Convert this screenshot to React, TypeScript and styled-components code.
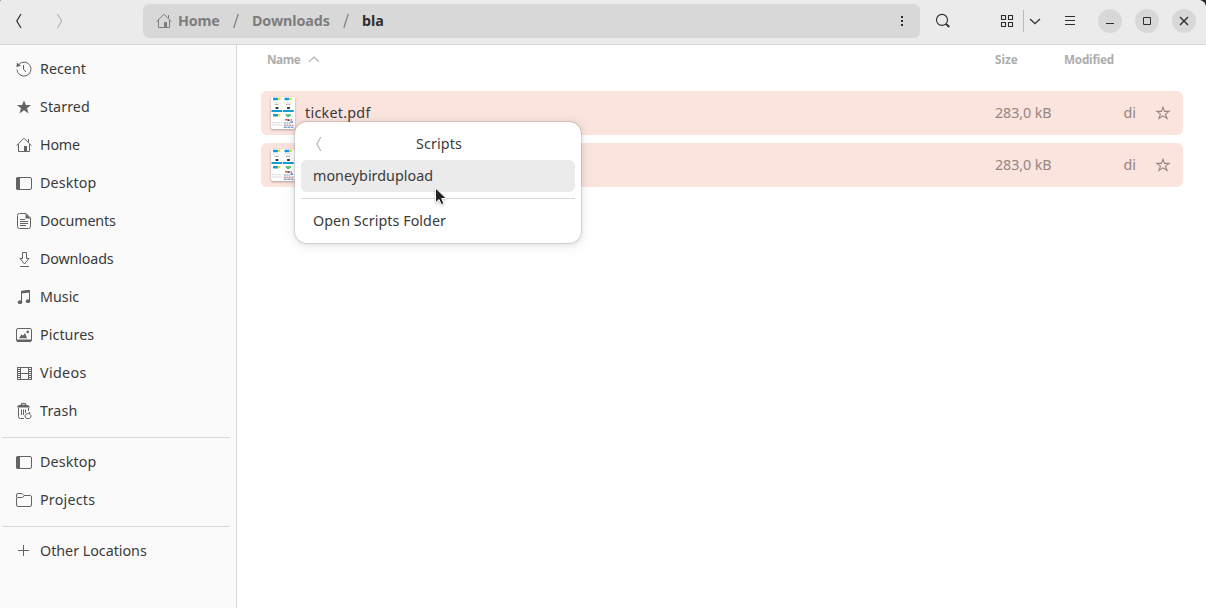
import React from "react";
import styled, { createGlobalStyle, css } from "styled-components";

const ink = "#3a3a3a";
const iconInk = "#636363";

const GlobalStyle = createGlobalStyle`
  *, *::before, *::after { box-sizing: border-box; }
  body {
    margin: 0;
    background: #2b2b2b;
    font-family: "Noto Sans", "Open Sans", sans-serif;
    font-size: 14.3px;
    color: ${ink};
    overflow: hidden;
  }
`;

const Window = styled.div`
  display: flex;
  flex-direction: column;
  width: 1206px;
  height: 608px;
  background: #fff;
  border-radius: 2px 8px 0 0;
  overflow: hidden;
`;

const Label = styled.span<{ $spacing?: number }>`
  line-height: 20px;
  white-space: nowrap;
  letter-spacing: ${(p) => p.$spacing ?? 0}px;
`;

/* Header bar */
const HeaderBar = styled.header`
  display: flex;
  align-items: center;
  flex: none;
  height: 45px;
  padding: 1px 10px 3px 10px;
  background: #ebebeb;
  border-bottom: 1px solid #d7d7d7;
  color: #2e2e2e;
`;

const IconButton = styled.button<{ $width?: number; $dim?: boolean }>`
  display: flex;
  align-items: center;
  justify-content: center;
  flex: none;
  width: ${(p) => p.$width ?? 34}px;
  height: 34px;
  padding: 0;
  border: 0;
  background: none;
  color: ${(p) => (p.$dim ? "#b4b4b4" : "#2e2e2e")};
`;

const NavButtons = styled.div`
  display: flex;
  gap: 24px;
  width: 133px;
`;

const PathBar = styled.nav`
  display: flex;
  align-items: center;
  width: 777px;
  height: 34px;
  padding: 0 10px 0 13px;
  border-radius: 6px;
  background: #d8d8d8;
  color: #808080;
  font-weight: 700;
`;

const Crumb = styled.span<{ $width: number; $current?: boolean }>`
  display: flex;
  align-items: center;
  gap: 6px;
  width: ${(p) => p.$width}px;
  color: ${(p) => (p.$current ? "#2e2e2e" : "#7d7d7d")};
`;

const Slash = styled.svg`
  flex: none;
  margin-right: 13px;
`;

const PathMenu = styled.span`
  display: flex;
  margin-left: auto;
  color: #2e2e2e;
`;

const ViewSwitcher = styled.div`
  display: flex;
  align-items: center;
  margin-left: 25px;
`;

const ViewDivider = styled.span`
  width: 1px;
  height: 22px;
  background: #b9b9b9;
`;

const WindowControls = styled.div`
  display: flex;
  gap: 13px;
  margin-left: auto;
`;

const ControlButton = styled.button`
  display: flex;
  align-items: center;
  justify-content: center;
  width: 24px;
  height: 24px;
  padding: 0;
  border: 0;
  border-radius: 50%;
  background: #d8d8d8;
  color: #2e2e2e;
`;

/* Sidebar */
const Body = styled.div`
  display: flex;
  flex: 1;
  min-height: 0;
`;

const Sidebar = styled.aside`
  flex: none;
  width: 237px;
  padding-top: 5px;
  background: #fafafa;
  border-right: 1px solid #d9d9d9;
`;

const Place = styled.a`
  display: flex;
  align-items: center;
  gap: 8px;
  height: 38px;
  padding-left: 16px;
`;

const PlaceSeparator = styled.hr`
  height: 1px;
  margin: 7px 6px 5px 2px;
  border: 0;
  background: #d9d9d9;
`;

const Glyph = styled.svg`
  flex: none;
  display: block;
  overflow: visible;
`;

/* File list */
const FileView = styled.main`
  flex: 1;
  padding: 0 23px 0 24px;
`;

const ColumnHeads = styled.div`
  display: grid;
  grid-template-columns: 728px 69px 1fr;
  height: 46px;
  padding: 4px 0 0 6px;
  color: #adadad;
  font-size: 11.7px;
  font-weight: 700;
`;

const SortHead = styled.span`
  display: flex;
  gap: 8px;
  height: 20px;
  align-items: center;
`;

const FileRow = styled.div`
  display: grid;
  grid-template-columns: 34px 690px 94px 48px 1fr;
  align-items: center;
  height: 44px;
  margin-bottom: 8px;
  padding-left: 10px;
  border-radius: 6px;
  background: #fbe4de;
`;

const Thumb = styled.svg`
  display: block;
  border-radius: 2px;
  filter: drop-shadow(0 1px 1px rgba(0, 0, 0, 0.3));
`;

const Meta = styled(Label)<{ $end?: boolean }>`
  color: #94857f;
  ${(p) => p.$end && css`
    text-align: right;
    padding-right: 1px;
  `}
`;

const StarCell = styled.span`
  display: flex;
  padding-left: 18px;
  color: #94857f;
`;

/* Scripts menu */
const Popover = styled.div`
  position: absolute;
  left: 295px;
  top: 122px;
  width: 286px;
  height: 121px;
  padding: 6px;
  border-radius: 12px;
  background: #fff;
  box-shadow: 0 0 0 1px rgba(0, 0, 0, 0.1), 0 1px 5px 1px rgba(0, 0, 0, 0.09),
    0 2px 14px 3px rgba(0, 0, 0, 0.05);
`;

const MenuTitle = styled.div`
  display: grid;
  grid-template-columns: 36px 1fr 34px;
  align-items: center;
  justify-items: center;
  height: 32px;
  color: #b8b8b8;
`;

const TitleText = styled(Label)`
  color: ${ink};
`;

const MenuItem = styled.div<{ $active?: boolean }>`
  display: flex;
  align-items: center;
  height: 32px;
  padding-left: 12px;
  border-radius: 6px;
  background: ${(p) => (p.$active ? "#ebebeb" : "transparent")};
`;

const MenuDivider = styled.hr`
  height: 1px;
  margin: 6px 0;
  border: 0;
  background: #d9d9d9;
`;

const Pointer = styled.svg`
  position: absolute;
  left: 434px;
  top: 187px;
  filter: drop-shadow(0 1px 1px rgba(0, 0, 0, 0.25));
`;

type IconName =
  | "recent" | "star" | "home" | "desktop" | "document" | "download"
  | "music" | "picture" | "video" | "trash" | "folder" | "plus";

const shapes: Record<IconName, React.ReactNode> = {
  recent: (
    <>
      <path d="M3.2 3A7 7 0 1 1 1 8.6" />
      <path d="M0.4 6.2 1 1.8 5 4.4Z" fill="currentColor" stroke="none" />
      <path d="M7.5 4V8.5L10 11" />
    </>
  ),
  star: <path d="M8 1.4 9.9 6H15L11 9.2 12.5 14.4 8 11.3 3.5 14.4 5 9.2 1 6H6.1Z" fill="currentColor" stroke="none" />,
  home: (
    <>
      <path d="M.6 8.6 8 1.2 15.4 8.6M2.5 7V14.5H13.5V7M12.5 2V5" />
      <path d="M8 9H11V15H8Z" fill="currentColor" stroke="none" />
    </>
  ),
  desktop: (
    <>
      <rect x=".5" y="2.5" width="15" height="12" rx="1.5" />
      <path d="M0 4Q0 2 2 2H4V15H2Q0 15 0 13Z" fill="currentColor" stroke="none" />
    </>
  ),
  document: (
    <>
      <path d="M3.5.5H10L14.5 5V13.5Q14.5 15.5 12.5 15.5H3.5Q1.5 15.5 1.5 13.5V2.5Q1.5.5 3.5.5ZM4 6.5H9M4 8.5H12M4 10.5H12M4 12.5H10" />
      <path d="M9.5.5 14.5 5.5H9.5Z" fill="currentColor" stroke="none" />
    </>
  ),
  download: <path d="M6.5 1.5H10.5V7.5H13L8.5 13 4 7.5H6.5ZM4 15.5H13" />,
  music: (
    <>
      <path d="M5.5 13V2.4L13.5 1.4V12" />
      <path d="M5 1.9 14 .9V3.6L5 4.5Z" fill="currentColor" stroke="none" />
      <ellipse cx="4" cy="13.2" rx="2.2" ry="1.9" fill="currentColor" stroke="none" />
      <ellipse cx="12" cy="12.2" rx="2.2" ry="1.9" fill="currentColor" stroke="none" />
    </>
  ),
  picture: (
    <>
      <rect x=".5" y="1.5" width="15" height="13" rx="1.5" />
      <path d="M1 12.5H15V14.8H1ZM3 11.3 5.6 7.3 7 8.8 9 6 11 11.3Z" fill="currentColor" stroke="none" />
      <circle cx="11.7" cy="4.9" r="1.3" fill="currentColor" stroke="none" />
    </>
  ),
  video: (
    <>
      <path d="M4.5 2V15M12.5 2V15M4.5 2.5H12.5M4.5 8.5H12.5M4.5 14.5H12.5M1.5 2V15M15.5 2V15" />
      <path d="M3 2V15M14 2V15" strokeWidth="2" strokeDasharray="1 1" />
    </>
  ),
  trash: (
    <>
      <path d="M5.5 2V.5H9.5V2M2.5 5V13.5Q2.5 15.5 4.5 15.5H8M5.5 6.5V12M7.5 6.5V12M9.5 6.5V10M12.5 5V8" />
      <path d="M1 4.5Q1.5 1.7 4.5 1.7H10Q13.2 1.7 14 4.5Z" fill="currentColor" stroke="none" />
      <path d="M10.5 11 9 12.7Q9 15.5 11 15.5H13.5Q15.5 14.5 15 12.5L13.5 11 14 9.5 12 10.5Z" />
    </>
  ),
  folder: <path d="M.5 5.5V3Q.5 1.5 2 1.5H6L8 3.5H14Q15.5 3.5 15.5 5V13Q15.5 14.5 14 14.5H2Q.5 14.5.5 13V7Q.5 5.5 2 5.5H6.5L8.5 3.5" />,
  plus: <path d="M2 7.5H13M7.5 2V13" />,
};

const PlaceIcon = ({ name, color = iconInk }: { name: IconName; color?: string }) => (
  <Glyph width="16" height="16" viewBox="0 0 16 16" fill="none" stroke="currentColor" color={color}>
    {shapes[name]}
  </Glyph>
);

const ChevronIcon = ({ flip = false }: { flip?: boolean }) => (
  <Glyph width="8" height="16" viewBox="0 0 8 16" fill="none" stroke="currentColor" strokeWidth="1.2">
    <path d={flip ? "M1.5 1 5.7 8 1.5 15" : "M6 1 1.8 8 6 15"} />
  </Glyph>
);

const Thumbnail = () => (
  <Thumb width="24" height="32" viewBox="0 0 24 32">
    <rect width="24" height="32" fill="#fff" />
    {[0, 11.5].map((x) => (
      <g key={x}>
        <path d={`M${x + 2} 2H${x + 7}`} stroke="#1597dc" strokeWidth="2.6" />
        <path d={`M${x + 6.8} 1.8H${x + 9.3}`} stroke="#e9dc2a" strokeWidth="2.4" />
        <path d={`M${x + 1.5} 5H${x + 9.5}`} stroke="#dcdcdc" strokeDasharray="1 .5" />
        <path d={`M${x + 3.5} 7.3H${x + 8}`} stroke="#8a8a8a" strokeDasharray="1 .4" />
        <path d={`M${x + 4.6} 11H${x + 7.3}`} stroke="#333" strokeWidth="2.2" />
        <path d={`M${x + 0.5} 14H${x + 11.2}`} stroke="#159bd9" strokeWidth="2" />
      </g>
    ))}
    <path d="M2 18.3H7" stroke="#1597dc" strokeWidth="2.4" />
    <path d="M6.8 18.1H9.3" stroke="#e9dc2a" strokeWidth="2.2" />
    <path d="M14.5 18H20" stroke="#38ba68" strokeWidth="1.4" />
    <path d="M16 19.3H18.5" stroke="#38ba68" strokeWidth="1.4" />
    <path d="M14 22.7H16.5M19.5 23H21" stroke="#e0603a" strokeWidth="1.6" />
    <path d="M16.5 23.2H18.5" stroke="#42474b" strokeWidth="1.8" />
    <path d="M.8 25.7H11M.8 28H11" stroke="#cacaca" strokeDasharray="1 .5" />
    <path d="M19.5 25.2H22" stroke="#4555e0" strokeWidth="1.2" />
    <path d="M12.8 26H19" stroke="#7c8fae" strokeDasharray="2 .6" />
    <path d="M12.8 28.2H22.5" stroke="#b06a7a" strokeDasharray="2 .7" />
    <path d="M12.8 30.2H22.5" stroke="#4f76bd" strokeDasharray="3 .7" />
  </Thumb>
);

type PlaceData = { icon: IconName; name: string; spacing?: number };

const places: PlaceData[][] = [
  [
    { icon: "recent", name: "Recent" },
    { icon: "star", name: "Starred", spacing: 0.05 },
    { icon: "home", name: "Home", spacing: -0.2 },
    { icon: "desktop", name: "Desktop", spacing: 0.12 },
    { icon: "document", name: "Documents", spacing: -0.15 },
    { icon: "download", name: "Downloads", spacing: -0.15 },
    { icon: "music", name: "Music" },
    { icon: "picture", name: "Pictures", spacing: 0.06 },
    { icon: "video", name: "Videos", spacing: 0.33 },
    { icon: "trash", name: "Trash", spacing: 0.2 },
  ],
  [
    { icon: "desktop", name: "Desktop", spacing: 0.12 },
    { icon: "folder", name: "Projects", spacing: 0.22 },
  ],
  [{ icon: "plus", name: "Other Locations", spacing: -0.02 }],
];

const files = [
  { name: "ticket.pdf", size: "283,0 kB", modified: "di" },
  { name: "", size: "283,0 kB", modified: "di" },
];

const CrumbSlash = () => (
  <Slash width="6" height="16" viewBox="0 0 6 16" stroke="#808080" strokeWidth="1.2">
    <path d="M5.2 1 .8 15" />
  </Slash>
);

export default function App() {
  return (
    <>
      <GlobalStyle />
      <Window>
        <HeaderBar>
          <NavButtons>
            <IconButton $width={17}><ChevronIcon /></IconButton>
            <IconButton $width={17} $dim><ChevronIcon flip /></IconButton>
          </NavButtons>
          <PathBar>
            <Crumb $width={77}>
              <PlaceIcon name="home" color="#7d7d7d" />
              <Label $spacing={-0.2}>Home</Label>
            </Crumb>
            <CrumbSlash />
            <Crumb $width={91}><Label $spacing={-0.1}>Downloads</Label></Crumb>
            <CrumbSlash />
            <Crumb $width={40} $current><Label>bla</Label></Crumb>
            <PathMenu>
              <Glyph width="16" height="16" viewBox="0 0 16 16" fill="currentColor">
                <path d="M7 3H9V5H7ZM7 7H9V9H7ZM7 11H9V13H7Z" />
              </Glyph>
            </PathMenu>
          </PathBar>
          <IconButton $width={46}>
            <Glyph width="16" height="16" viewBox="0 0 16 16" fill="none" stroke="currentColor" strokeWidth="1.1">
              <circle cx="7" cy="6.9" r="5.5" />
              <path d="M11 10.8 14.2 14" strokeWidth="1.9" />
            </Glyph>
          </IconButton>
          <ViewSwitcher>
            <IconButton $width={32}>
              <Glyph width="16" height="16" viewBox="0 0 16 16" fill="none" stroke="currentColor" strokeWidth="1.1">
                <path d="M2.5 2.5H6.5V6.5H2.5ZM9.5 2.5H13.5V6.5H9.5ZM2.5 9.5H6.5V13.5H2.5ZM9.5 9.5H13.5V13.5H9.5Z" />
              </Glyph>
            </IconButton>
            <ViewDivider />
            <IconButton $width={22}>
              <Glyph width="12" height="16" viewBox="0 0 12 16" fill="none" stroke="currentColor" strokeWidth="1.3">
                <path d="M1 6 6 10.7 11 6" />
              </Glyph>
            </IconButton>
          </ViewSwitcher>
          <IconButton $width={48}>
            <Glyph width="16" height="16" viewBox="0 0 16 16" stroke="currentColor">
              <path d="M3 3.5H13M3 7.5H13M3 11.5H13" />
            </Glyph>
          </IconButton>
          <WindowControls>
            <ControlButton>
              <Glyph width="16" height="16" viewBox="0 0 16 16" stroke="currentColor"><path d="M4 10.5H12" /></Glyph>
            </ControlButton>
            <ControlButton>
              <Glyph width="16" height="16" viewBox="0 0 16 16" fill="none" stroke="currentColor"><path d="M4.5 4.5H11.5V11.5H4.5Z" /></Glyph>
            </ControlButton>
            <ControlButton>
              <Glyph width="16" height="16" viewBox="0 0 16 16" stroke="currentColor" strokeWidth="1.4"><path d="M4 4 12 12M12 4 4 12" /></Glyph>
            </ControlButton>
          </WindowControls>
        </HeaderBar>
        <Body>
          <Sidebar>
            {places.map((group, i) => (
              <React.Fragment key={i}>
                {i > 0 && <PlaceSeparator />}
                {group.map((p) => (
                  <Place key={p.name}>
                    <PlaceIcon name={p.icon} />
                    <Label $spacing={p.spacing}>{p.name}</Label>
                  </Place>
                ))}
              </React.Fragment>
            ))}
          </Sidebar>
          <FileView>
            <ColumnHeads>
              <SortHead>
                <Label $spacing={-0.4}>Name</Label>
                <Glyph width="12" height="8" viewBox="0 0 12 8" fill="none" stroke="currentColor" strokeWidth="1.1">
                  <path d="M1 6.8 6 2 11 6.8" />
                </Glyph>
              </SortHead>
              <Label>Size</Label>
              <Label $spacing={-0.2}>Modified</Label>
            </ColumnHeads>
            {files.map((file, i) => (
              <FileRow key={i}>
                <Thumbnail />
                <Label $spacing={0.27}>{file.name}</Label>
                <Meta $spacing={-0.1}>{file.size}</Meta>
                <Meta $end>{file.modified}</Meta>
                <StarCell>
                  <Glyph width="16" height="16" viewBox="0 0 16 16" fill="none" stroke="currentColor" strokeWidth="1.1">
                    <path d="M8 2.2 9.6 6.4H14.1L10.6 9.1 12 13.5 8 10.8 4 13.5 5.4 9.1 1.9 6.4H6.4Z" />
                  </Glyph>
                </StarCell>
              </FileRow>
            ))}
          </FileView>
        </Body>
      </Window>
      <Popover>
        <MenuTitle>
          <ChevronIcon />
          <TitleText $spacing={0.15}>Scripts</TitleText>
        </MenuTitle>
        <MenuItem $active><Label $spacing={0.03}>moneybirdupload</Label></MenuItem>
        <MenuDivider />
        <MenuItem><Label $spacing={0.06}>Open Scripts Folder</Label></MenuItem>
      </Popover>
      <Pointer width="14" height="20" viewBox="0 0 14 20">
        <path d="M1.5 1V15.8L5 12.5 7.3 17.6 9.9 16.5 7.7 11.5H12.3Z" fill="#222" stroke="#fff" />
      </Pointer>
    </>
  );
}
